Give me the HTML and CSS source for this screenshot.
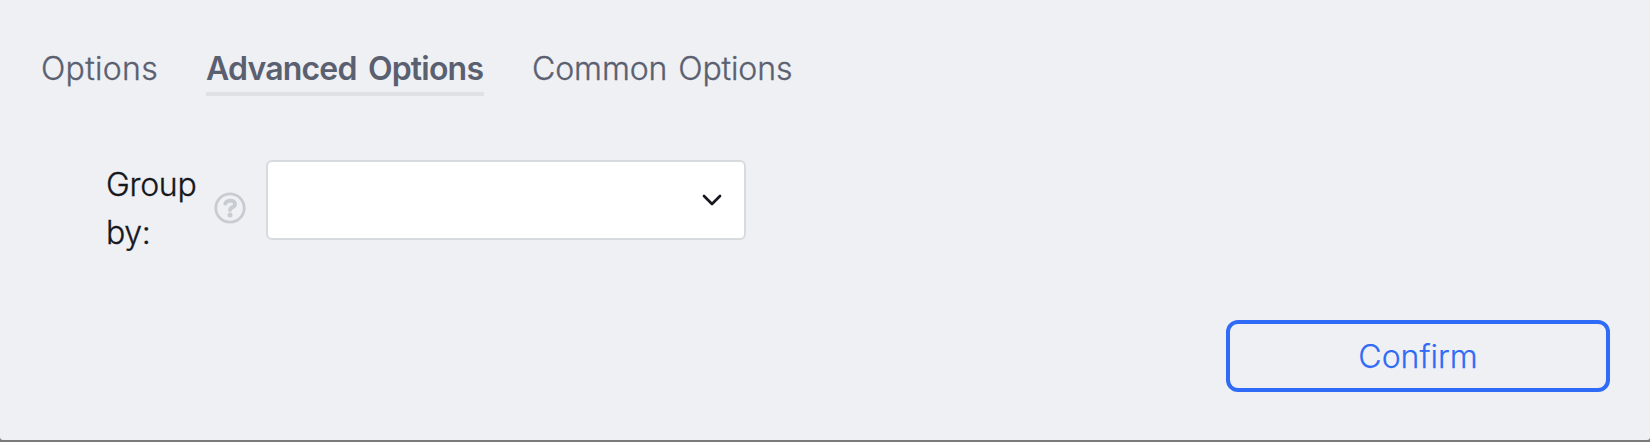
FILE: index.html
```html
<!DOCTYPE html>
<html lang="en">
<head>
<meta charset="utf-8">
<title>Advanced Options</title>
<link rel="stylesheet" href="styles.css">
</head>
<body>
<main class="panel">
  <nav class="tabs">
    <a class="tab tab-options">Options</a>
    <a class="tab tab-active">Advanced Options</a>
    <a class="tab tab-common">Common Options</a>
  </nav>
  <div class="field">
    <label class="field-label">Group by:</label>
    <svg class="help" viewBox="0 0 32 32" fill="none">
      <circle cx="16" cy="16" r="14.2" stroke="currentColor" stroke-width="2.8"/>
      <path d="M11.2 11.6C12.2 9.6 13.9 8.6 16.3 8.6C19.2 8.6 21 10.1 21 12.4C21 15.4 16 15.1 16 18" stroke="currentColor" stroke-width="3.8" stroke-linecap="round" stroke-linejoin="round"/>
      <circle cx="16" cy="23.1" r="2.5" fill="currentColor"/>
    </svg>
    <div class="select">
      <svg class="chevron" viewBox="0 0 20 12" fill="none">
        <path d="M2 2L10 10L18 2" stroke="currentColor" stroke-width="2.7" stroke-linecap="round" stroke-linejoin="round"/>
      </svg>
    </div>
  </div>
  <div class="actions">
    <button class="confirm">Confirm</button>
  </div>
</main>
</body>
</html>
```
FILE: styles.css
```css
* { box-sizing: border-box; }
body {
  margin: 0;
  height: 442px;
  overflow: hidden;
  background: #7b7b7e;
  font-family: Inter, "Liberation Sans", sans-serif;
  font-size: 32px;
  font-weight: 300;
  line-height: 48px;
  -webkit-text-stroke: 0.35px currentColor;
}
.panel {
  height: 440px;
  padding: 44px 40px 0 42px;
  background: #eff0f4;
  border-radius: 0 0 3px 3px;
}
.tabs {
  display: flex;
  gap: 48px;
  color: #5a6070;
}
.tab {
  height: 52px;
  padding-top: 1px;
  white-space: nowrap;
}
.tab-options {
  width: 116px;
  margin: 0 1px 0 -1px;
  letter-spacing: 0.3px;
}
.tab-active {
  width: 278px;
  font-weight: 600;
  letter-spacing: -0.8px;
  word-spacing: 4px;
  border-bottom: 4px solid #dfe1e5;
  -webkit-text-stroke: 0;
}
.tab-common {
  letter-spacing: -0.1px;
  word-spacing: 2px;
}
.field {
  display: flex;
  align-items: flex-start;
  margin: 64px 0 0 64px;
  height: 96px;
  color: #16181d;
}
.field-label {
  width: 108px;
  padding: 1px 16px 0 0;
  letter-spacing: -0.3px;
}
.help {
  width: 32px;
  height: 32px;
  margin: 32px 20px 0 0;
  color: #c7ccd3;
}
.select {
  display: flex;
  align-items: center;
  justify-content: flex-end;
  width: 480px;
  height: 80px;
  padding-right: 22px;
  background: #fff;
  border: 2px solid #d7dade;
  border-radius: 6px;
}
.chevron { width: 20px; height: 12px; }
.actions {
  display: flex;
  justify-content: flex-end;
  margin-top: 64px;
}
.confirm {
  width: 384px;
  height: 72px;
  padding: 2px 0 0;
  border: 4px solid #2f6bf6;
  border-radius: 12px;
  background: transparent;
  color: #2f6bf6;
  font: inherit;
  -webkit-text-stroke: 0.25px #2f6bf6;
}
```
